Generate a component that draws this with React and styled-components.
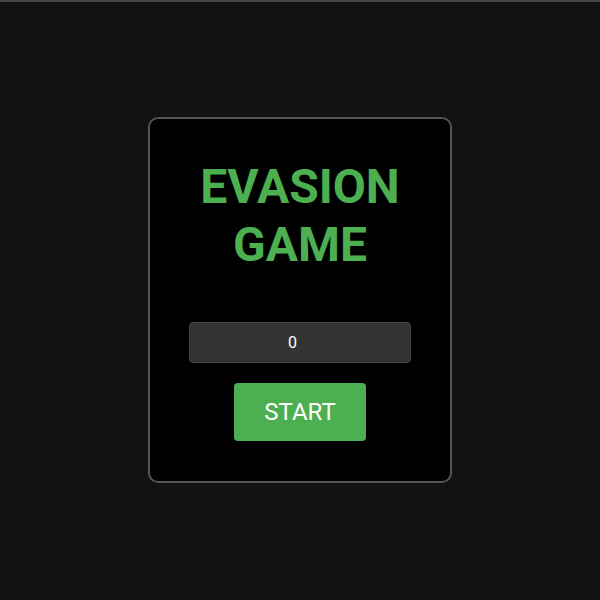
import React from "react";
import styled, { createGlobalStyle } from "styled-components";

const Global = createGlobalStyle`
  html, body { margin: 0; padding: 0; background: #111; }
  body { font-family: Roboto, "Liberation Sans", sans-serif; }
  * { box-sizing: border-box; }
`;

const Page = styled.div`
  height: 100vh;
  border-top: 2px solid #444;
  display: flex;
  align-items: center;
  justify-content: center;
  background: #111;
`;

const Card = styled.div`
  width: 304px;
  height: 366px;
  margin-top: -2px;
  background: #000;
  border: 2px solid #555;
  border-radius: 10px;
  padding: 39px 0 40px;
  display: flex;
  flex-direction: column;
  align-items: center;
`;

const Title = styled.h1`
  margin: 0 0 49px;
  color: #4caf50;
  font-size: 48px;
  font-weight: 700;
  line-height: 1.2;
  text-align: center;
  width: 220px;
`;

const Score = styled.input`
  width: 222px;
  height: 41px;
  padding: 10px;
  background: #333;
  border: 1px solid #444;
  border-radius: 4px;
  color: #fff;
  font-family: Roboto, "Liberation Sans", sans-serif;
  font-size: 16px;
  text-align: center;
  outline: none;
`;

const Button = styled.button`
  margin-top: 20px;
  width: 132px;
  height: 58px;
  padding: 15px 30px;
  background: #4caf50;
  border: none;
  border-radius: 4px;
  color: #fff;
  font-family: Roboto, "Liberation Sans", sans-serif;
  font-size: 24px;
  cursor: pointer;
`;

export default function App() {
  return (
    <>
      <Global />
      <Page>
        <Card>
          <Title>EVASION GAME</Title>
          <Score type="number" value={0} readOnly />
          <Button>START</Button>
        </Card>
      </Page>
    </>
  );
}
